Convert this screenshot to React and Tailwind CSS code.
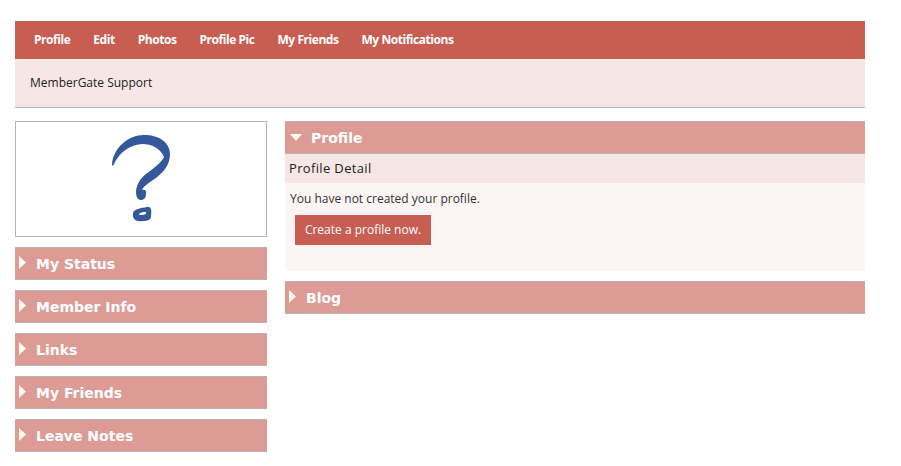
import React from "react";

const navLinks = ["Profile", "Edit", "Photos", "Profile Pic", "My Friends", "My Notifications"];
const sidePanels = ["My Status", "Member Info", "Links", "My Friends", "Leave Notes"];

function PanelHeader({ title, open }) {
  return (
    <div className="h-[33px] flex items-center bg-[#dd9b96] border-y border-[#b5b5b5] font-['DejaVu_Sans',sans-serif] font-bold text-[14px] text-white">
      {open ? (
        <svg width="12" height="7" viewBox="0 0 12 7" className="ml-[5px] mr-[9px]">
          <path d="M0 0 H12 L6 7 Z" fill="#fff8f0" />
        </svg>
      ) : (
        <svg width="7" height="13" viewBox="0 0 7 13" className="ml-[4px] mr-[10px] mb-[3px]">
          <path d="M0 0 L7 6.5 L0 13 Z" fill="#fff8f0" />
        </svg>
      )}
      <span className="mt-[2px]">{title}</span>
    </div>
  );
}

function QuestionMark() {
  return (
    <svg width="62" height="92" viewBox="0 0 62 92">
      <path
        d="M2 32 C3 15 18 2 34 2 C50 2 60 10 60 21 C60 33 52 41 43 47 C37 51 33 54 32 57 C35 56 37 58 36 61 C36 65 34 67 30 67 C27 66 26 63 26 58 C27 50 31 45 36 41 C44 35 51 30 54 24 C50 15 42 11 32 11 C18 12 8 21 3 33 Z"
        fill="#34589a"
      />
      <path
        fillRule="evenodd"
        d="M23 80 C24 76 31 75 37 74 C41 73 42 77 41 83 C41 87 38 88 32 88 C26 89 22 86 23 80 Z M29 81 C31 79 34 79 36 79 C37 81 34 82 32 82 C30 82 29 82 29 81 Z"
        fill="#34589a"
      />
    </svg>
  );
}

export default function App() {
  return (
    <div className="w-[901px] h-[466px] overflow-hidden bg-white pt-[21px] pl-[15px] font-['Open_Sans',sans-serif]">
      <div className="w-[850px]">
        {/* top nav */}
        <div className="h-[38px] bg-[#c85d52] flex items-center pl-[19px] gap-[23px] text-[12px] font-bold tracking-[-0.45px] text-white">
          {navLinks.map((link) => (
            <span key={link}>{link}</span>
          ))}
        </div>
        <div className="h-[49px] bg-[#f6e7e5] border-b border-[#b5b5b5] flex items-center pl-[15px] text-[12px] text-[#222]">
          MemberGate Support
        </div>

        <div className="flex gap-[18px] mt-[13px]">
          {/* left column */}
          <div className="w-[252px] flex flex-col gap-[10px]">
            <div className="h-[116px] bg-white border border-[#b5b5b5] flex items-center justify-center">
              <QuestionMark />
            </div>
            {sidePanels.map((title) => (
              <PanelHeader key={title} title={title} />
            ))}
          </div>

          {/* right column */}
          <div className="w-[580px]">
            <PanelHeader title="Profile" open />
            <div className="h-[29px] bg-[#f6e7e5] flex items-center pl-[4px] text-[13px] tracking-[0.35px] text-[#222]">
              Profile Detail
            </div>
            <div className="h-[88px] bg-[#fcf5f5] pl-[5px] pt-[7px] text-[12px] text-[#333]">
              <p>You have not created your profile.</p>
              <button className="block mt-[7px] ml-[5px] h-[30px] w-[136px] bg-[#c85d52] text-white text-[12px]">
                Create a profile now.
              </button>
            </div>
            <div className="mt-[10px]">
              <PanelHeader title="Blog" />
            </div>
          </div>
        </div>
      </div>
    </div>
  );
}
